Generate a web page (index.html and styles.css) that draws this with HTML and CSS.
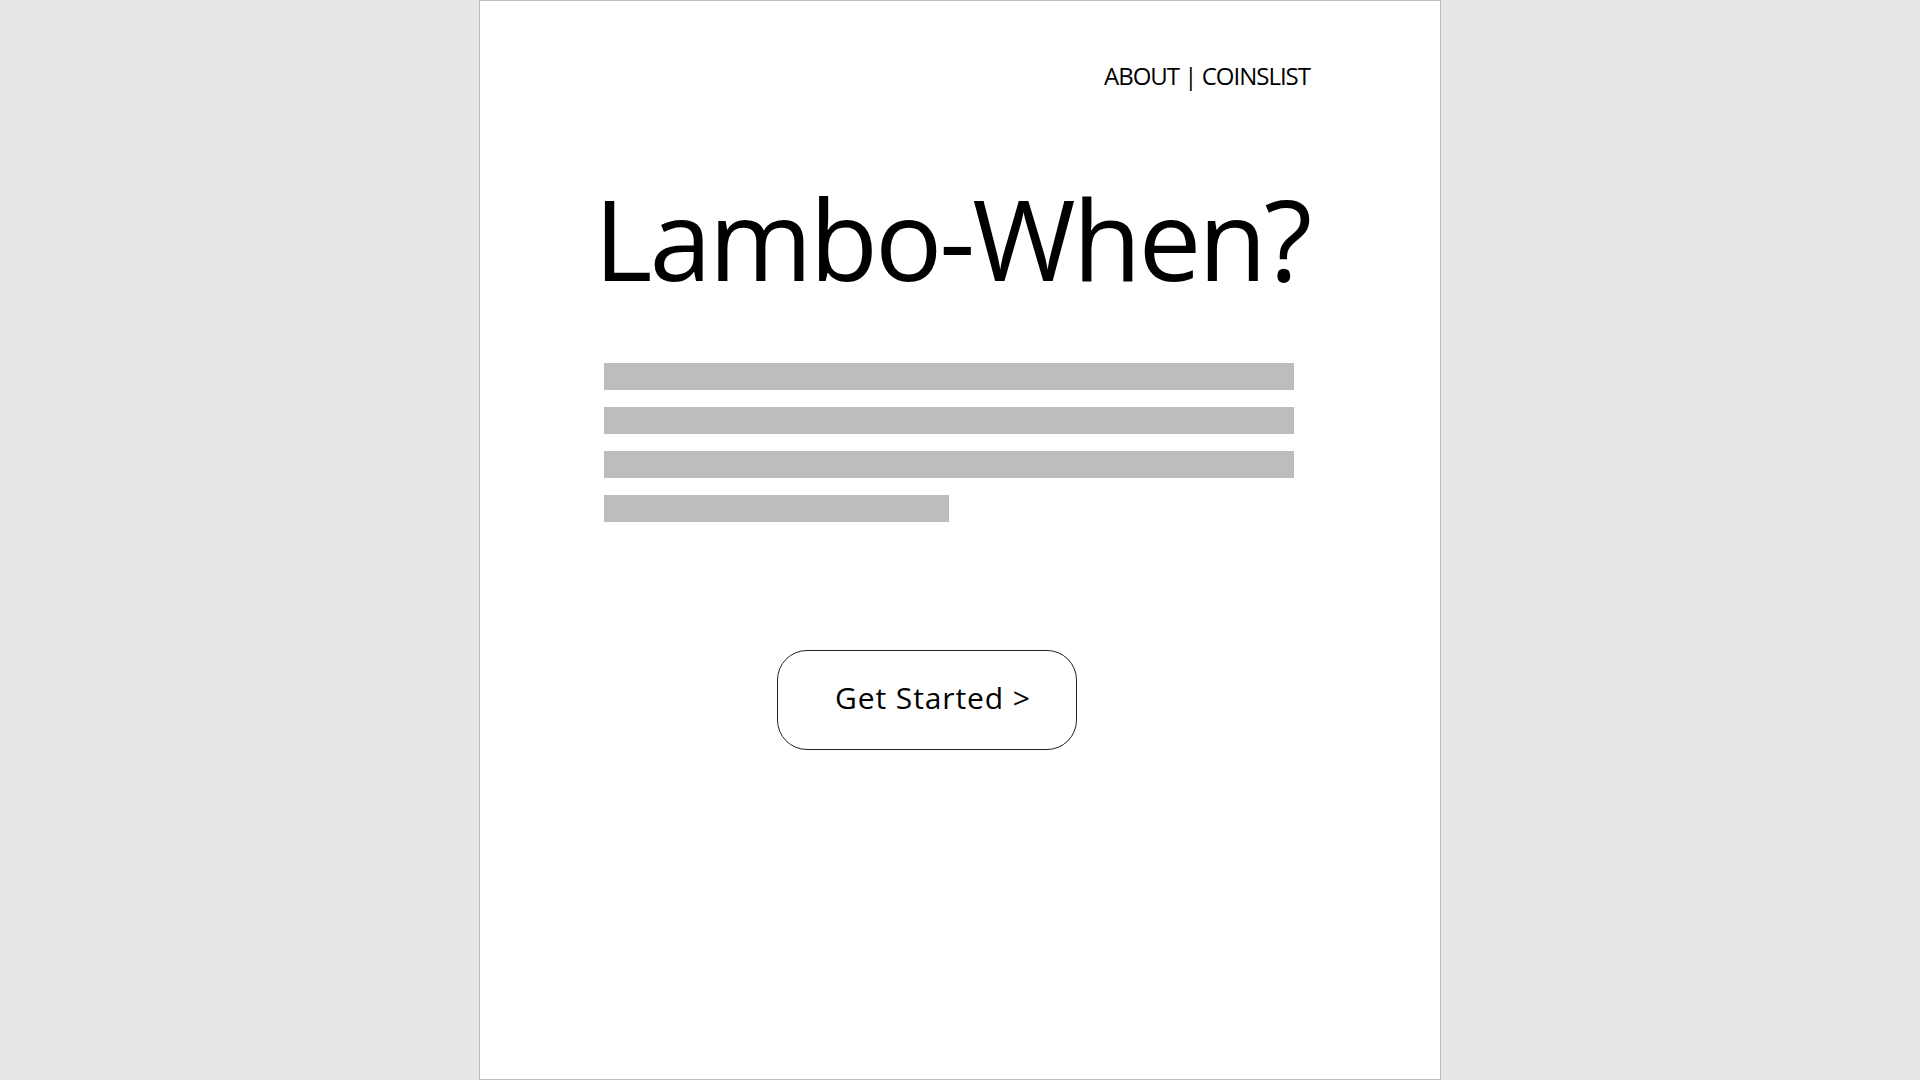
FILE: index.html
```html
<!DOCTYPE html>
<html lang="en">
<head>
<meta charset="utf-8">
<title>Lambo-When?</title>
<link rel="stylesheet" href="styles.css">
</head>
<body>
<div class="page">
  <nav class="nav">ABOUT | COINSLIST</nav>
  <h1 class="title">Lambo-When?</h1>
  <div class="text-lines">
    <div class="line"></div>
    <div class="line"></div>
    <div class="line"></div>
    <div class="line short"></div>
  </div>
  <div class="cta-row">
    <a class="cta" href="#">Get Started &gt;</a>
  </div>
</div>
</body>
</html>
```

FILE: styles.css
```css
html, body {
  margin: 0;
  padding: 0;
  height: 100%;
}
body {
  background: #e5e7e6;
  font-family: "Open Sans", "Noto Sans", sans-serif;
  color: #000;
}
.page {
  box-sizing: border-box;
  width: 962px;
  height: 1080px;
  margin-left: 479px;
  background: #fff;
  border: 1px solid #bcbec0;
  padding: 0 130px 0 124px;
  display: flex;
  flex-direction: column;
  align-items: flex-start;
}
.nav {
  align-self: flex-end;
  font-size: 24px;
  line-height: 30px;
  letter-spacing: -1px;
  margin-top: 60px;
  white-space: nowrap;
}
.title {
  margin: 87px 0 0 -10px;
  font-weight: 400;
  font-size: 112px;
  line-height: 120px;
  letter-spacing: -3px;
  white-space: nowrap;
}
.text-lines {
  margin-top: 65px;
  display: flex;
  flex-direction: column;
  align-items: flex-start;
  gap: 17px;
}
.line {
  width: 690px;
  height: 27px;
  background: #bcbdbf;
}
.line.short {
  width: 345px;
}
.cta-row {
  margin-top: 128px;
  padding-left: 173px;
}
.cta {
  box-sizing: border-box;
  display: flex;
  align-items: center;
  justify-content: center;
  width: 300px;
  height: 100px;
  padding: 0 0 6px 12px;
  border: 1px solid #231f20;
  border-radius: 30px;
  color: #000;
  text-decoration: none;
  font-size: 30px;
  letter-spacing: 0.9px;
}
```
